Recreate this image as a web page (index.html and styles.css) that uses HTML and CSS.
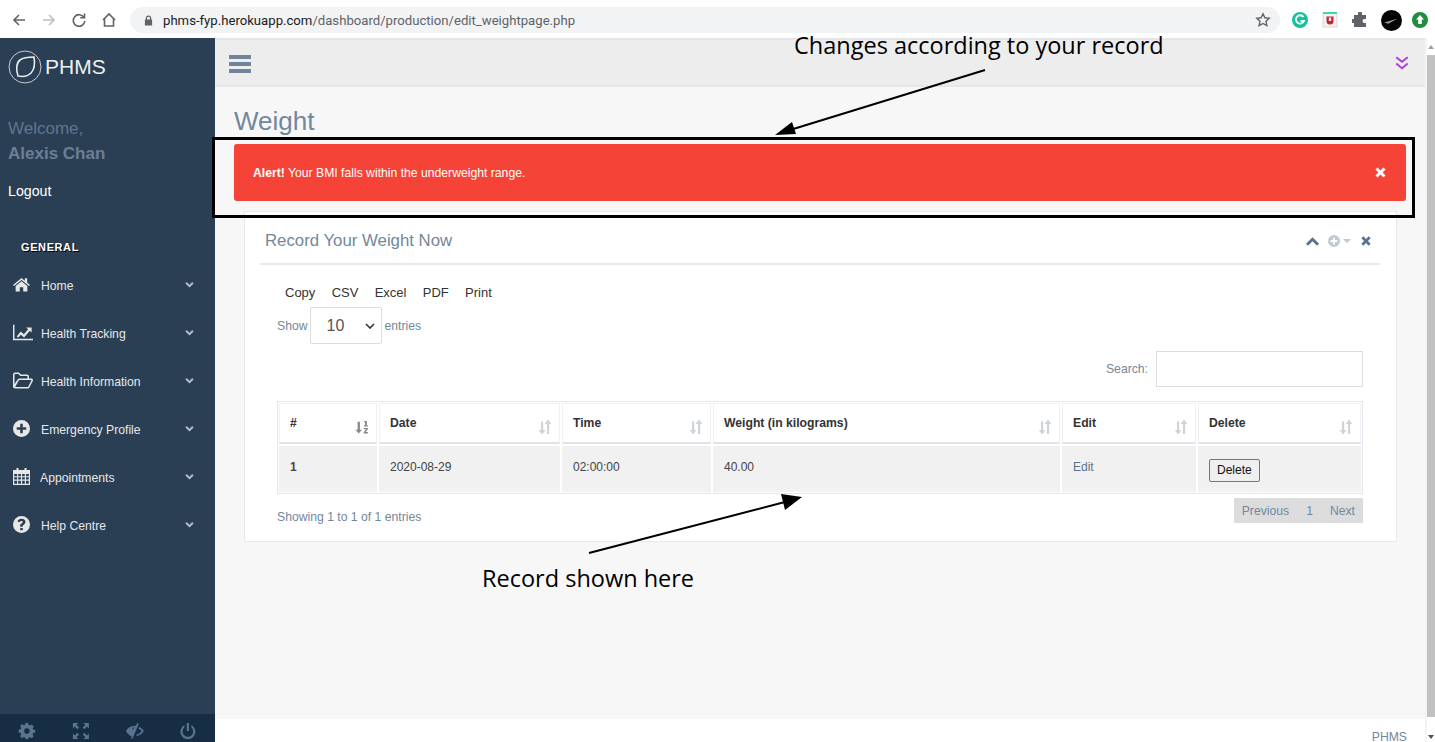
FILE: index.html
```html
<!DOCTYPE html>
<html lang="en">
<head>
    <meta charset="UTF-8">
    <title>PHMS - Weight</title>
    <link rel="stylesheet" href="styles.css">
</head>
<body>

<!-- Icon set used all over the page -->
<svg class="icon-defs" width="0" height="0">
    <symbol id="i-down" viewBox="0 0 16 16"><path d="M2 5l2-2 4 4 4-4 2 2-6 6z"/></symbol>
    <symbol id="i-up" viewBox="0 0 16 16"><path d="M1 11.500l2.200 2.200L8 8.900l4.800 4.800 2.200-2.200-7-7z"/></symbol>
    <symbol id="i-x" viewBox="0 0 16 16"><path d="M4.4 1.8L8 5.4l3.6-3.6 2.6 2.6L10.6 8l3.6 3.6-2.6 2.6L8 10.6l-3.6 3.6-2.6-2.6L5.4 8 1.800 4.400z"/></symbol>
    <symbol id="i-home" viewBox="0 0 18 16"><path d="M9 1L0 8.400l1 1.200L9 3.200l8 6.400 1-1.200-3-2.500V1.500h-2.500v2.500z"/><path d="M9 4.500L2.800 9.500V15.500H7.200V11h3.600v4.500h4.400V9.500z"/></symbol>
    <symbol id="i-chart" viewBox="0 0 22 17"><path d="M0 0h1.600v15.400H22V17H0z"/><path d="M4 13l4.500-5.500 3.500 3 4.600-5.700-2-1.800H20.500V8.500l-2-1.900-6.300 7.400-3.600-3L6 14z"/></symbol>
    <symbol id="i-folder" viewBox="0 0 20 16"><path fill-rule="evenodd" d="M0 2.200C0 1 .9 0 2 0h4l1.800 2H14c1.100 0 2 .9 2 2v2h2.300c1.300 0 2.100 1.300 1.500 2.400l-3.300 6.300c-.4.800-1.100 1.300-2 1.300H2c-1.100 0-2-.9-2-2zM1.500 11.800L4.600 6.900C5 6.300 5.700 6 6.400 6h8.100V4.300c0-.5-.3-.8-.8-.8H7.200L5.400 1.500H2.200c-.4 0-.7.300-.7.700zM2.200 14.500h12.500c.3 0 .5-.2.600-.4l3-5.800c.1-.4-.1-.8-.5-.8H6.600c-.4 0-.7.200-.9.500z"/></symbol>
    <symbol id="i-plus" viewBox="0 0 16 16"><path fill-rule="evenodd" d="M8 0a8 8 0 1 1 0 16A8 8 0 0 1 8 0zM6.800 3.500v3.300H3.500v2.400h3.300v3.300h2.400V9.200h3.300V6.800H9.200V3.500z"/></symbol>
    <symbol id="i-cal" viewBox="0 0 17 17"><path fill-rule="evenodd" d="M3.500 0h2v2h6V0h2v2H17v15H0V2h3.500zM1.200 6v2.200h2.900V6zm4 0v2.200h2.700V6zm3.900 0v2.200h2.700V6zm3.900 0v2.200h2.800V6zM1.200 9.300v2.300h2.900V9.300zm4 0v2.300h2.700V9.300zm3.900 0v2.300h2.700V9.300zm3.900 0v2.300h2.800V9.300zM1.200 12.700v3.100h2.900v-3.100zm4 0v3.100h2.700v-3.100zm3.900 0v3.100h2.700v-3.100zm3.900 0v3.100h2.800v-3.100z"/></symbol>
    <symbol id="i-help" viewBox="0 0 16 16"><path fill-rule="evenodd" d="M8 0a8 8 0 1 1 0 16A8 8 0 0 1 8 0zM6.800 11.200v2.300h2.400v-2.300zM8 2.500c-2 0-3.300 1-3.700 2.600l2 .8c.3-.9.800-1.300 1.600-1.300.8 0 1.300.4 1.300 1 0 1.300-2.500 1.500-2.500 3.700v.9h2.400v-.6c0-1.300 2.600-1.500 2.600-4.200 0-1.800-1.600-2.900-3.700-2.900z"/></symbol>
    <symbol id="i-cog" viewBox="0 0 16 16"><path fill-rule="evenodd" d="M6.600 0h2.800l.4 2.100 1.300.5L12.900 1.400l2 2-1.200 1.800.5 1.300 2.100.4v2.800l-2.100.4-.5 1.300 1.200 1.800-2 2-1.800-1.200-1.300.5-.4 2.100H6.600l-.4-2.100-1.300-.5-1.800 1.200-2-2 1.200-1.800-.5-1.300L-.2 9.400V6.600l2.100-.4.500-1.300L1.200 3.100l2-2 1.800 1.200 1.300-.5zM8 5.300a2.700 2.700 0 1 0 0 5.400 2.700 2.700 0 0 0 0-5.400z"/></symbol>
    <symbol id="i-full" viewBox="0 0 16 16"><path d="M0 0h5.500L3.600 1.900 6.200 4.500 4.500 6.200 1.900 3.600 0 5.500zM16 0v5.500l-1.900-1.900-2.600 2.600-1.700-1.700 2.600-2.600L10.500 0zM0 16v-5.500l1.900 1.900 2.600-2.600 1.700 1.700-2.600 2.600L5.500 16zM16 16h-5.500l1.900-1.900-2.600-2.600 1.700-1.700 2.600 2.600 1.900-1.900z"/></symbol>
    <symbol id="i-eye" viewBox="0 0 18 16"><path fill-rule="evenodd" d="M11.500 0l1.400.8L6.500 16l-1.400-.8.800-1.800C3.400 12.400 1.400 10.600 0 8c2-3.500 5-5.200 9-5.300h.9zM8.800 4.300C7.300 4.500 6.300 6 6.500 7.400l2.300-3.100zM13.500 4c1.800 1 3.400 2.300 4.500 4-1.800 3-4.300 4.700-7.800 5.200l.8-1.800c2-.5 3.600-1.700 4.800-3.400-.8-1.100-2-2-3.200-2.500z"/></symbol>
    <symbol id="i-power" viewBox="0 0 16 16"><path d="M6.900 0h2.200v8H6.900z"/><path d="M4.500 2.100v2.400A5.200 5.200 0 0 0 2.700 8.500a5.300 5.300 0 0 0 10.600 0c0-1.600-.7-3-1.800-4V2.100a7.500 7.500 0 1 1-7 0z"/></symbol>
    <symbol id="i-sort" viewBox="0 0 14 16"><path d="M3 2.500h2.200v8.500h2.300L4.100 15.500.7 11H3zM10 .5l3.400 4.500H11.200V15H9V5H6.600z"/></symbol>
    <symbol id="i-sort-asc" viewBox="0 0 16 16"><path d="M3 2h2.600v9h2.400L4.300 15.500.6 11H3z"/><path d="M10.500 1h3v5h1.200v1.500h-4.400V6h1.200V2.500h-1zM10 9h4.700v1.700l-2.600 3.100h2.600V15.500H10v-1.700l2.600-3.100H10z"/></symbol>
</svg>

<!-- Browser toolbar -->
<div class="browser-bar">
    <div class="browser-nav">
        <svg viewBox="0 0 16 16" class="nav-icon"><path d="M14 8H3M8 3L3 8l5 5"/></svg>
        <svg viewBox="0 0 16 16" class="nav-icon nav-off"><path d="M2 8h11M8 3l5 5-5 5"/></svg>
        <svg viewBox="0 0 16 16" class="nav-icon"><path d="M13 5.500A5.800 5.800 0 1 0 13.800 9M13.500 1.500v4.300H9.200"/></svg>
        <svg viewBox="0 0 16 16" class="nav-icon"><path d="M2 8l6-6 6 6M3.500 7v7h9V7"/></svg>
    </div>
    <div class="address">
        <svg viewBox="0 0 10 12" class="lock"><path d="M2 5V3.500a3 3 0 0 1 6 0V5h1v6.500H1V5zm1.400 0h3.200V3.500a1.600 1.600 0 0 0-3.200 0z"/></svg>
        <span class="url"><span class="url-host">phms-fyp.herokuapp.com</span>/dashboard/production/edit_weightpage.php</span>
        <svg viewBox="0 0 16 16" class="star"><path d="M8 1.800l1.900 4 4.300.5-3.200 3 .9 4.300L8 11.500l-3.900 2.100.9-4.300-3.200-3 4.300-.5z"/></svg>
    </div>
    <div class="extensions">
        <svg viewBox="0 0 16 16" class="ext"><circle cx="8" cy="8" r="8" fill="#15c39a"/><path d="M11.500 5A4.200 4.200 0 1 0 12 9H8.500" fill="none" stroke="#fff" stroke-width="1.800"/></svg>
        <svg viewBox="0 0 16 16" class="ext"><rect x="1" y="1" width="14" height="14" fill="#f2f2f2" stroke="#ccc" stroke-width=".7"/><rect x="1" y="0" width="14" height="2" fill="#3fdc9b"/><path d="M4.500 4.500h7v4.500a3.500 3.500 0 0 1-7 0zM6.800 5.500v3.400h2.400V5.500z" fill="#c4262e"/></svg>
        <svg viewBox="0 0 16 16" class="ext"><path d="M6 1.500a2 2 0 0 1 4 0V3h4v4h-1.500a2 2 0 0 0 0 4H14v4H2v-4H.7a2 2 0 0 1 0-4H2V3h4z" fill="#5f6368"/></svg>
        <svg viewBox="0 0 20 20" class="ext ext-big"><circle cx="10" cy="10" r="10" fill="#050505"/><path d="M3 12l13-4-9 5z" fill="#8a99a3"/></svg>
        <svg viewBox="0 0 16 16" class="ext"><circle cx="8" cy="8" r="8" fill="#1e8e3e"/><path d="M8 3l4 4.500H9.800V12H6.200V7.500H4z" fill="#fff"/></svg>
    </div>
</div>

<div class="app">
    <!-- Left menu -->
    <aside class="sidebar">
        <div class="brand">
            <svg viewBox="0 0 34 34" class="brand-mark"><circle cx="17" cy="17" r="16" fill="none" stroke="#c4ccd4" stroke-width="1"/><path d="M10 26C8 20 8 13 12 10c4-3 9-3 14-3 1 6 1 12-3 16-4 4-8 4-13 3z" fill="none" stroke="#e8ecef" stroke-width="1.600"/></svg>
            <span class="brand-name">PHMS</span>
        </div>
        <div class="profile">
            <div class="welcome">Welcome,</div>
            <div class="user-name">Alexis Chan</div>
            <div class="logout">Logout</div>
        </div>
        <h3 class="menu-title">GENERAL</h3>
        <ul class="menu">
            <li><svg class="menu-icon"><use href="#i-home"/></svg><span class="menu-label">Home</span><svg class="menu-arrow"><use href="#i-down"/></svg></li>
            <li><svg class="menu-icon menu-icon-wide"><use href="#i-chart"/></svg><span class="menu-label">Health Tracking</span><svg class="menu-arrow"><use href="#i-down"/></svg></li>
            <li><svg class="menu-icon menu-icon-wide"><use href="#i-folder"/></svg><span class="menu-label">Health Information</span><svg class="menu-arrow"><use href="#i-down"/></svg></li>
            <li><svg class="menu-icon"><use href="#i-plus"/></svg><span class="menu-label">Emergency Profile</span><svg class="menu-arrow"><use href="#i-down"/></svg></li>
            <li><svg class="menu-icon"><use href="#i-cal"/></svg><span class="menu-label menu-label-tight">Appointments</span><svg class="menu-arrow"><use href="#i-down"/></svg></li>
            <li><svg class="menu-icon"><use href="#i-help"/></svg><span class="menu-label">Help Centre</span><svg class="menu-arrow"><use href="#i-down"/></svg></li>
        </ul>
        <div class="sidebar-footer">
            <svg><use href="#i-cog"/></svg>
            <svg><use href="#i-full"/></svg>
            <svg><use href="#i-eye"/></svg>
            <svg><use href="#i-power"/></svg>
        </div>
    </aside>

    <!-- Page body -->
    <div class="main">
        <div class="top-nav">
            <div class="burger"><span></span><span></span><span></span></div>
            <svg viewBox="0 0 14 14" class="double-down"><path d="M2 2l5 4 5-4M2 7.500l5 4 5-4"/></svg>
        </div>
        <div class="content">
            <h2 class="page-title">Weight</h2>
            <div class="alert">
                <span><strong>Alert!</strong> Your BMI falls within the underweight range.</span>
                <svg class="alert-close"><use href="#i-x"/></svg>
            </div>
            <div class="panel">
                <div class="panel-head">
                    <span class="panel-title">Record Your Weight Now</span>
                    <div class="panel-tools">
                        <svg class="tool-up"><use href="#i-up"/></svg>
                        <svg class="tool-plus"><use href="#i-plus"/></svg>
                        <span class="caret"></span>
                        <svg class="tool-x"><use href="#i-x"/></svg>
                    </div>
                </div>
                <div class="export-btns">
                    <span>Copy</span><span>CSV</span><span>Excel</span><span>PDF</span><span>Print</span>
                </div>
                <div class="length-row">
                    Show
                    <div class="select-box"><span>10</span><svg viewBox="0 0 10 6"><path d="M1 1l4 4 4-4"/></svg></div>
                    entries
                </div>
                <div class="search-row">
                    Search:
                    <div class="search-box"></div>
                </div>
                <table class="data-table">
                    <thead>
                        <tr>
                            <th class="col-num"># <svg class="sort sort-on"><use href="#i-sort-asc"/></svg></th>
                            <th class="col-date">Date <svg class="sort"><use href="#i-sort"/></svg></th>
                            <th class="col-time">Time <svg class="sort"><use href="#i-sort"/></svg></th>
                            <th class="col-weight">Weight (in kilograms) <svg class="sort"><use href="#i-sort"/></svg></th>
                            <th class="col-edit">Edit <svg class="sort"><use href="#i-sort"/></svg></th>
                            <th class="col-del">Delete <svg class="sort"><use href="#i-sort"/></svg></th>
                        </tr>
                    </thead>
                    <tbody>
                        <tr>
                            <td><b>1</b></td>
                            <td>2020-08-29</td>
                            <td>02:00:00</td>
                            <td>40.00</td>
                            <td class="edit-link">Edit</td>
                            <td class="del-cell"><button class="del-btn">Delete</button></td>
                        </tr>
                    </tbody>
                </table>
                <div class="table-foot">
                    <span>Showing 1 to 1 of 1 entries</span>
                    <div class="pager"><span>Previous</span><span>1</span><span>Next</span></div>
                </div>
            </div>
        </div>
        <div class="page-footer">PHMS</div>
    </div>

    <div class="scrollbar">
        <span class="scroll-up"></span>
        <div class="scroll-thumb"></div>
        <span class="scroll-down"></span>
    </div>
</div>

<!-- Annotations drawn over the screenshot -->
<div class="note-box"></div>
<div class="note note-top">Changes according to your record</div>
<div class="note note-bottom">Record shown here</div>
<svg class="note-arrows" viewBox="0 0 1435 742">
    <path d="M985 70L790 130M589 553L785 502"/>
    <polygon points="775,135 792,122 796,134"/>
    <polygon points="802,497 781,494 785,510"/>
</svg>

</body>
</html>
```

FILE: styles.css
```css
* {
    box-sizing: border-box;
}

html, body {
    height: 742px;
    overflow: hidden;
}

body {
    margin: 0;
    font-family: "Liberation Sans", Arial, sans-serif;
    font-size: 12.2px;
    color: #73879C;
    background-color: #fff;
}

.icon-defs {
    position: absolute;
}

/* Browser toolbar */
.browser-bar {
    display: flex;
    align-items: center;
    height: 38px;
    padding-top: 2px;
    background-color: #fff;
}

.browser-nav {
    display: flex;
    gap: 14px;
    width: 130px;
    padding-left: 11px;
}

.nav-icon {
    width: 16px;
    height: 16px;
    fill: none;
    stroke: #5f6368;
    stroke-width: 1.6;
}

.nav-off {
    stroke: #bcc0c4;
}

.address {
    display: flex;
    align-items: center;
    width: 1150px;
    height: 26px;
    padding: 0 9px 0 14px;
    border-radius: 13px;
    background-color: #f1f3f4;
}

.lock {
    width: 9px;
    height: 11px;
    fill: #5f6368;
}

.url {
    flex: 1;
    margin-left: 10px;
    font-family: Roboto, sans-serif;
    font-size: 13.15px;
    color: #5f6368;
}

.url-host {
    color: #202124;
}

.star {
    width: 16px;
    height: 16px;
    fill: none;
    stroke: #5f6368;
    stroke-width: 1.4;
}

.extensions {
    display: flex;
    align-items: center;
    gap: 14px;
    padding-left: 12px;
}

.ext {
    width: 16px;
    height: 16px;
}

.ext-big {
    width: 21px;
    height: 21px;
    margin: 0 -4px 0 -1px;
}

/* App frame */
.app {
    display: flex;
    height: 704px;
}

.sidebar {
    display: flex;
    flex-direction: column;
    flex: none;
    width: 215px;
    background-color: #2A3F54;
}

.brand {
    display: flex;
    align-items: center;
    height: 58px;
    padding: 0 0 0 8px;
}

.brand-mark {
    width: 34px;
    height: 34px;
}

.brand-name {
    margin-left: 3px;
    font-size: 21px;
    color: #ecf0f1;
}

.profile {
    padding: 22px 0 0 8px;
}

.welcome {
    font-size: 17px;
    line-height: 22px;
    color: #5f768d;
}

.user-name {
    margin-top: 3px;
    font-size: 17px;
    line-height: 22px;
    font-weight: bold;
    color: #6a8096;
}

.logout {
    margin-top: 17px;
    font-size: 14.2px;
    line-height: 18px;
    color: #fff;
}

.menu-title {
    margin: 40px 0 0 21px;
    font-size: 11px;
    line-height: 14px;
    font-weight: bold;
    letter-spacing: .6px;
    color: #fff;
    text-shadow: 1px 1px #000;
}

.menu {
    flex: 1;
    margin: 8px 0 0;
    padding: 0;
    list-style: none;
}

.menu li {
    display: flex;
    align-items: center;
    height: 48px;
    padding: 0 20px 0 13px;
    font-size: 12.2px;
    color: #E7E7E7;
}

.menu-icon {
    flex: none;
    width: 17px;
    height: 17px;
    margin-top: -4px;
    fill: #E7E7E7;
}

.menu-icon-wide {
    width: 20px;
    height: 17px;
    margin-right: -3px;
}

.menu-label {
    flex: 1;
    margin-left: 11px;
}

.menu-label-tight {
    margin-left: 10px;
}

.menu-arrow {
    width: 11px;
    height: 11px;
    margin-top: -2px;
    fill: #b5bcc4;
}

.sidebar-footer {
    display: flex;
    height: 28px;
    background-color: #172D44;
}

.sidebar-footer svg {
    flex: 1;
    height: 16px;
    margin-top: 9px;
    fill: #5A738E;
}

/* Main column */
.main {
    display: flex;
    flex-direction: column;
    flex: 1;
    min-width: 0;
}

.top-nav {
    display: flex;
    align-items: center;
    justify-content: space-between;
    flex: none;
    height: 49px;
    padding: 0 15px 0 14px;
    background-color: #EDEDED;
    border-top: 2px solid #e4e6ea;
    border-bottom: 2px solid #e4e8ec;
}

.burger {
    display: flex;
    flex-direction: column;
    gap: 3px;
    margin-top: 2px;
}

.burger span {
    display: block;
    width: 22px;
    height: 4px;
    background-color: #6f859c;
}

.double-down {
    width: 16px;
    height: 16px;
    fill: none;
    stroke: #a93fdc;
    stroke-width: 1.7;
}

.content {
    flex: 1;
    min-height: 0;
    padding: 0 19px;
    background-color: #F7F7F7;
}

.page-title {
    margin: 19px 0 8px;
    font-size: 26px;
    line-height: 30px;
    font-weight: normal;
}

.alert {
    display: flex;
    align-items: center;
    justify-content: space-between;
    height: 57px;
    padding: 0 19px;
    border-radius: 3px;
    color: #fff;
    background-color: #F54337;
}

.alert-close {
    width: 13px;
    height: 13px;
    fill: #fff;
}

.panel {
    height: 331px;
    margin: 10px 9px 0 10px;
    padding: 0 16px 0 15px;
    background-color: #fff;
    border: 1px solid #E6E9ED;
}

.panel-head {
    display: flex;
    align-items: center;
    justify-content: space-between;
    height: 53px;
    padding: 6px 8px 0 5px;
    border-bottom: 2px solid #E6E9ED;
}

.panel-title {
    font-size: 16.8px;
}

.panel-tools {
    display: flex;
    align-items: center;
}

.panel-tools svg {
    fill: #5A738E;
}

.tool-up {
    width: 15px;
    height: 15px;
}

.tool-plus {
    width: 12px;
    height: 12px;
    margin-left: 8px;
    fill: #c2c9d0 !important;
}

.caret {
    width: 0;
    height: 0;
    margin-left: 3px;
    border-top: 4px solid #c2c9d0;
    border-left: 4px solid transparent;
    border-right: 4px solid transparent;
}

.tool-x {
    width: 12px;
    height: 12px;
    margin-left: 9px;
}

.export-btns {
    display: flex;
    gap: 16.3px;
    padding: 20px 0 0 25px;
    font-size: 13px;
    line-height: 16px;
    color: #333;
}

.length-row {
    display: flex;
    align-items: center;
    gap: 3px;
    padding: 6px 0 0 17px;
}

.select-box {
    display: flex;
    align-items: center;
    justify-content: space-between;
    width: 72px;
    height: 37px;
    margin-left: -1px;
    padding: 0 6px 0 16px;
    font-size: 16px;
    color: #555;
    background-color: #fff;
    border: 1px solid #ddd;
    border-radius: 2px;
}

.select-box svg {
    width: 10px;
    height: 6px;
    fill: none;
    stroke: #333;
    stroke-width: 1.6;
}

.search-row {
    display: flex;
    align-items: center;
    justify-content: flex-end;
    gap: 8px;
    height: 36px;
    margin: 7px 17px 0 0;
}

.search-box {
    width: 207px;
    height: 36px;
    background-color: #fff;
    border: 1px solid #ddd;
}

.data-table {
    width: 1086px;
    margin: 14px 0 0 17px;
    border-spacing: 2px;
    table-layout: fixed;
    font-size: 12px;
    box-shadow: inset 0 0 0 1px #e3e6ea;
}

.col-num { width: 98px; }
.col-date { width: 181px; }
.col-time { width: 149px; }
.col-weight { width: 347px; }
.col-edit { width: 134px; }
.col-del { width: 163px; }

.data-table th {
    position: relative;
    height: 41px;
    padding: 0 11px 0 10px;
    text-align: left;
    font-size: 12.2px;
    font-weight: bold;
    color: #333;
    border: 1px solid #eef0f3;
    border-bottom: 2px solid #dfe4ea;
}

.data-table td {
    height: 46px;
    padding: 0 11px 5px;
    color: #444;
    background-color: #F1F1F1;
}

.data-table .del-cell {
    padding: 2px 11px 0;
}

.edit-link {
    color: #5A738E !important;
}

.sort {
    position: absolute;
    right: 7px;
    bottom: 7px;
    width: 14px;
    height: 16px;
    fill: #cfd4d9;
}

.sort-on {
    fill: #888;
}

.del-btn {
    height: 23px;
    padding: 0 7px;
    font-family: "Liberation Sans", Arial, sans-serif;
    font-size: 12px;
    color: #111;
    background-color: #efefef;
    border: 1px solid #767676;
    border-radius: 2px;
}

.table-foot {
    display: flex;
    justify-content: space-between;
    margin: 4px 17px 0 17px;
}

.table-foot > span {
    padding-top: 12px;
}

.pager {
    display: flex;
    gap: 17px;
    height: 25px;
    padding: 0 8px;
    align-items: center;
    background-color: #dcdcdc;
}

.page-footer {
    flex: none;
    height: 23px;
    padding: 11px 18px 0 0;
    text-align: right;
    line-height: 14px;
    background-color: #fff;
}

/* Page scrollbar */
.scrollbar {
    position: relative;
    flex: none;
    width: 10px;
    border-left: 2px solid #f4f4f4;
    background-color: #fff;
}

.scroll-up,
.scroll-down {
    position: absolute;
    left: 1px;
    width: 0;
    height: 0;
    border-left: 3px solid transparent;
    border-right: 3px solid transparent;
}

.scroll-up {
    top: 7px;
    border-bottom: 4px solid #a0a0a0;
}

.scroll-down {
    bottom: 3px;
    border-top: 4px solid #505050;
}

.scroll-thumb {
    height: 662px;
    margin-top: 17px;
    background-color: #c1c1c1;
}

/* Annotations */
.note-box {
    position: absolute;
    left: 212px;
    top: 137px;
    width: 1203px;
    height: 81px;
    border: 3px solid #000;
}

.note {
    position: absolute;
    font-family: "Open Sans", sans-serif;
    font-size: 23.5px;
    line-height: 28px;
    color: #000;
    white-space: nowrap;
}

.note-top {
    left: 794px;
    top: 31px;
}

.note-bottom {
    left: 482px;
    top: 564px;
}

.note-arrows {
    position: absolute;
    left: 0;
    top: 0;
    width: 1435px;
    height: 742px;
    pointer-events: none;
}

.note-arrows path {
    fill: none;
    stroke: #000;
    stroke-width: 2;
}

.note-arrows polygon {
    fill: #000;
}
```
